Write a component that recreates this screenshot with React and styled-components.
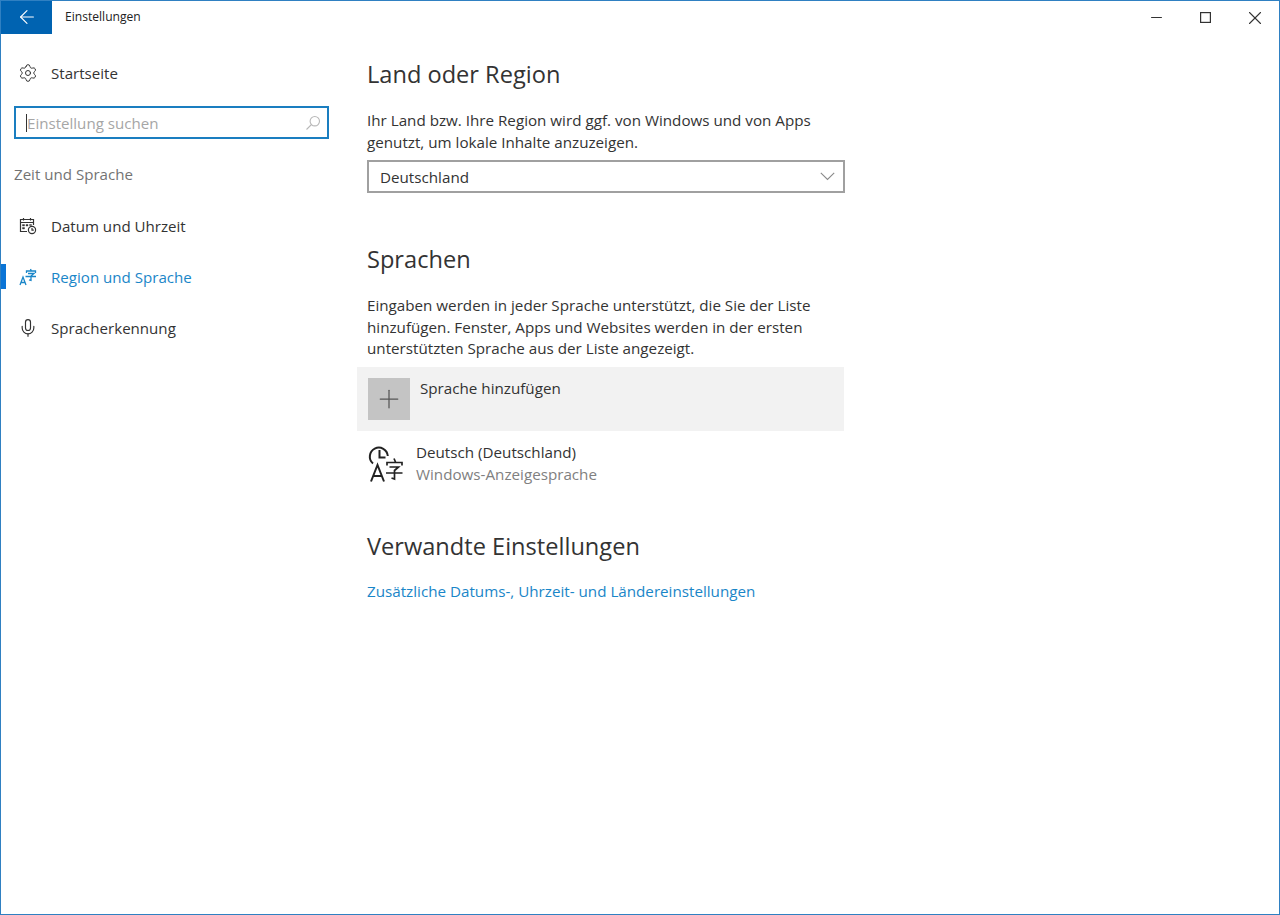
import React from "react";
import styled, { createGlobalStyle } from "styled-components";
import { Settings, Plus, Mic, ArrowLeft, Minus, X } from "lucide-react";

const Global = createGlobalStyle`
  html, body { margin: 0; padding: 0; background: #fff; }
  body { font-family: "Open Sans", "Liberation Sans", sans-serif; color: #333; }
  a { text-decoration: none; }
`;

const Fenster = styled.div`
  width: 1280px;
  height: 915px;
  box-sizing: border-box;
  border: 1px solid #2f80c2;
  display: flex;
  flex-direction: column;
  overflow: hidden;
`;

const TitleBar = styled.header`
  height: 33px;
  flex: none;
  display: flex;
  align-items: center;
`;

const BackButton = styled.div`
  width: 51px;
  height: 33px;
  box-sizing: border-box;
  padding-bottom: 2px;
  background: #0063b1;
  color: #fff;
  display: flex;
  align-items: center;
  justify-content: center;
  margin-right: 13px;
`;

const TitleText = styled.span`
  font-size: 12.1px;
  color: #222;
  flex: 1;
  padding-bottom: 2px;
`;

const WindowButton = styled.div`
  width: 49px;
  height: 31px;
  display: flex;
  align-items: center;
  justify-content: center;
  color: #333;
`;

const Main = styled.div`
  flex: 1;
  display: flex;
`;

const Sidebar = styled.nav`
  width: 339px;
  flex: none;
  padding-top: 13px;
`;

const NavRow = styled.div`
  position: relative;
  height: 51px;
  display: flex;
  align-items: center;
  padding-left: 16px;
  gap: 13px;
  font-size: 15.1px;
  color: ${(p) => (p.$active ? "#1a86c8" : "#333")};
`;

const ActiveBar = styled.span`
  position: absolute;
  left: 0;
  top: 13px;
  width: 5px;
  height: 25px;
  background: #0a74d6;
`;

const IconSlot = styled.span`
  width: 21px;
  height: 21px;
  display: flex;
  align-items: center;
  justify-content: center;
  flex: none;
`;

const SearchBox = styled.div`
  margin: 8px 0 0 13px;
  width: 315px;
  height: 33px;
  box-sizing: border-box;
  border: 2px solid #1a7ec0;
  display: flex;
  align-items: center;
  padding: 0 6px 0 10px;
  font-size: 15.1px;
  color: #a6a6a6;
`;

const Caret = styled.span`
  width: 1px;
  height: 18px;
  background: #333;
  flex: none;
`;

const SearchText = styled.span`
  flex: 1;
`;

const GroupLabel = styled.div`
  margin: 24px 0 15px 13px;
  height: 22px;
  line-height: 22px;
  font-size: 15.1px;
  color: #737373;
`;

const Content = styled.main`
  width: 488px;
  padding: 22px 0 0 27px;
`;

const Heading = styled.h2`
  margin: ${(p) => p.$top || 0}px 0 0;
  font-size: 23.6px;
  line-height: 36px;
  font-weight: 400;
  color: #333;
`;

const Body = styled.p`
  margin: 18px 0 0;
  font-size: 15.2px;
  line-height: 21.6px;
  color: #333;
`;

const Select = styled.div`
  margin-top: 7px;
  width: 478px;
  height: 33px;
  box-sizing: border-box;
  border: 2px solid #a0a0a0;
  display: flex;
  align-items: center;
  justify-content: space-between;
  padding: 0 8px 0 11px;
  font-size: 15.2px;
  color: #333;
`;

const AddRow = styled.div`
  margin: 7px 0 0 -10px;
  width: 487px;
  height: 64px;
  box-sizing: border-box;
  background: #f2f2f2;
  display: flex;
  padding: 11px 0 0 11px;
  gap: 10px;
`;

const AddIcon = styled.div`
  width: 42px;
  height: 42px;
  background: #c4c4c4;
  color: #555;
  display: flex;
  align-items: center;
  justify-content: center;
`;

const AddLabel = styled.div`
  font-size: 15.2px;
  line-height: 21px;
  color: #333;
`;

const LangRow = styled.div`
  margin-top: 11px;
  display: flex;
  gap: 13px;
  align-items: center;
`;

const LangText = styled.div`
  font-size: 15.2px;
  line-height: 21.6px;
  color: #333;
`;

const LangSub = styled.div`
  color: #808080;
`;

const Link = styled.a`
  display: block;
  margin-top: 16px;
  font-size: 15.2px;
  line-height: 22px;
  color: #1a86c8;
`;

const CalendarIcon = () => (
  <svg width="18" height="18" viewBox="0 0 18 18" fill="none" stroke="#333" strokeWidth="1.2">
    <path d="M8 14.500H1.500V2.500h13V8" />
    <path d="M1.500 5.500h13M4.500 1v2.500M11.500 1v2.500" />
    <path d="M3.500 7.500h2V9h-2zM7 7.500h2V9H7zM3.500 10.500h2V12h-2zM10.500 7.500h2v1h-2z" fill="#333" strokeWidth=".4" />
    <circle cx="13" cy="13" r="3.600" />
    <path d="M13 11v2.200h1.800" />
  </svg>
);

const RegionIcon = () => (
  <svg width="18" height="18" viewBox="0 0 18 18" fill="none" stroke="#1a86c8" strokeWidth="1.3">
    <path d="M1 17 4 9l3 8M2 14.500h4" />
    <path d="M7.500 5V3h9v2M11.500 1l.8 2M9 5.500h6l-3 2.500v4.500l-2-.6M6.500 8.500h10.500" />
  </svg>
);

const SearchGlyph = () => (
  <svg width="16" height="16" viewBox="0 0 16 16" fill="none" stroke="#b8b8b8" strokeWidth="1.1">
    <circle cx="9.800" cy="6.200" r="4.700" />
    <path d="M6.500 9.500 1.500 14.500" />
  </svg>
);

const ChevronGlyph = () => (
  <svg width="15" height="9" viewBox="0 0 15 9" fill="none" stroke="#8a8a8a" strokeWidth="1.100">
    <path d="M.8.800 7.500 7.500 14.200.800" />
  </svg>
);

const SquareGlyph = () => (
  <svg width="11" height="11" viewBox="0 0 11 11" fill="none" stroke="#333" strokeWidth="1.200">
    <rect x=".6" y=".6" width="9.800" height="9.800" />
  </svg>
);

const LanguageIcon = () => (
  <svg width="36" height="38" viewBox="0 0 36 38" fill="none" stroke="#222" strokeWidth="2">
    <path d="M6 18.500A9 9 0 1 1 20.800 11" />
    <path d="M12.500 5v7.500h6" />
    <path d="M4 36.500 10.500 20l6.500 16.500M6.200 31h8.600" />
    <path d="M20 20.500v-3h15v3M27 13.500l1.500 3.500M22.500 22h9l-4 3.500v8.500l-3-1M19 28h16.500" strokeWidth="1.700" />
  </svg>
);

export default function App() {
  return (
    <>
      <Global />
      <Fenster>
        <TitleBar>
          <BackButton>
            <ArrowLeft size={22} strokeWidth={1.2} />
          </BackButton>
          <TitleText>Einstellungen</TitleText>
          <WindowButton><Minus size={17} strokeWidth={1.500} /></WindowButton>
          <WindowButton><SquareGlyph /></WindowButton>
          <WindowButton><X size={22} strokeWidth={1.200} /></WindowButton>
        </TitleBar>
        <Main>
          <Sidebar>
            <NavRow>
              <IconSlot><Settings size={20} strokeWidth={1.200} color="#333" /></IconSlot>
              Startseite
            </NavRow>
            <SearchBox>
              <Caret />
              <SearchText>Einstellung suchen</SearchText>
              <SearchGlyph />
            </SearchBox>
            <GroupLabel>Zeit und Sprache</GroupLabel>
            <NavRow>
              <IconSlot><CalendarIcon /></IconSlot>
              Datum und Uhrzeit
            </NavRow>
            <NavRow $active>
              <ActiveBar />
              <IconSlot><RegionIcon /></IconSlot>
              Region und Sprache
            </NavRow>
            <NavRow>
              <IconSlot><Mic size={20} strokeWidth={1.400} color="#333" /></IconSlot>
              Spracherkennung
            </NavRow>
          </Sidebar>
          <Content>
            <Heading>Land oder Region</Heading>
            <Body>
              Ihr Land bzw. Ihre Region wird ggf. von Windows und von Apps
              <br />
              genutzt, um lokale Inhalte anzuzeigen.
            </Body>
            <Select>
              Deutschland
              <ChevronGlyph />
            </Select>
            <Heading $top={48}>Sprachen</Heading>
            <Body>
              Eingaben werden in jeder Sprache unterstützt, die Sie der Liste
              <br />
              hinzufügen. Fenster, Apps und Websites werden in der ersten
              <br />
              unterstützten Sprache aus der Liste angezeigt.
            </Body>
            <AddRow>
              <AddIcon><Plus size={30} strokeWidth={1} /></AddIcon>
              <AddLabel>Sprache hinzufügen</AddLabel>
            </AddRow>
            <LangRow>
              <LanguageIcon />
              <LangText>
                Deutsch (Deutschland)
                <LangSub>Windows-Anzeigesprache</LangSub>
              </LangText>
            </LangRow>
            <Heading $top={43}>Verwandte Einstellungen</Heading>
            <Link>Zusätzliche Datums-, Uhrzeit- und Ländereinstellungen</Link>
          </Content>
        </Main>
      </Fenster>
    </>
  );
}
